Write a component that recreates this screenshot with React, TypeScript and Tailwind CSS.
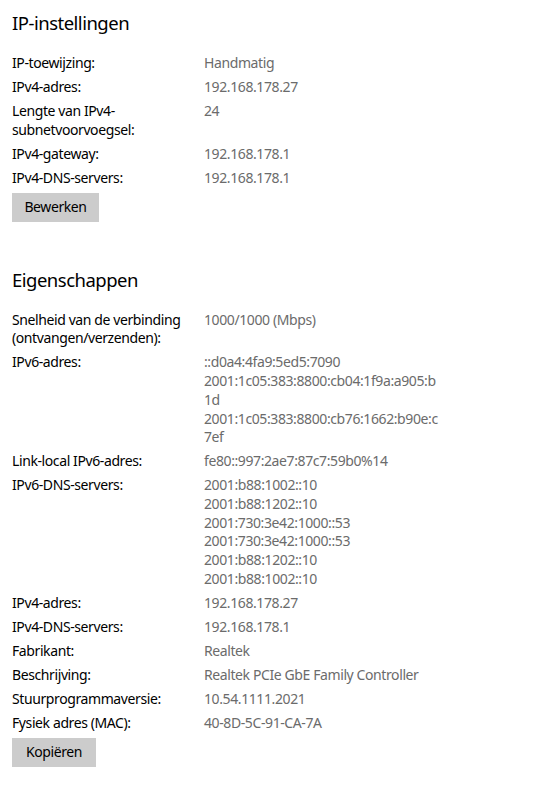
import React from "react";

type RowProps = { label: string[]; value: string[] };

const Row = ({ label, value }: RowProps) => (
  <div className="flex">
    <div className="w-[192px] shrink-0 text-black">
      {label.map((l, i) => (
        <div key={i} className="whitespace-nowrap">
          {l}
        </div>
      ))}
    </div>
    <div className="text-[#6b6b6b]">
      {value.map((v, i) => (
        <div key={i} className="whitespace-nowrap">
          {v}
        </div>
      ))}
    </div>
  </div>
);

const ipRows: RowProps[] = [
  { label: ["IP-toewijzing:"], value: ["Handmatig"] },
  { label: ["IPv4-adres:"], value: ["192.168.178.27"] },
  { label: ["Lengte van IPv4-", "subnetvoorvoegsel:"], value: ["24"] },
  { label: ["IPv4-gateway:"], value: ["192.168.178.1"] },
  { label: ["IPv4-DNS-servers:"], value: ["192.168.178.1"] },
];

const propRows: RowProps[] = [
  {
    label: ["Snelheid van de verbinding", "(ontvangen/verzenden):"],
    value: ["1000/1000 (Mbps)"],
  },
  {
    label: ["IPv6-adres:"],
    value: [
      "::d0a4:4fa9:5ed5:7090",
      "2001:1c05:383:8800:cb04:1f9a:a905:b",
      "1d",
      "2001:1c05:383:8800:cb76:1662:b90e:c",
      "7ef",
    ],
  },
  { label: ["Link-local IPv6-adres:"], value: ["fe80::997:2ae7:87c7:59b0%14"] },
  {
    label: ["IPv6-DNS-servers:"],
    value: [
      "2001:b88:1002::10",
      "2001:b88:1202::10",
      "2001:730:3e42:1000::53",
      "2001:730:3e42:1000::53",
      "2001:b88:1202::10",
      "2001:b88:1002::10",
    ],
  },
  { label: ["IPv4-adres:"], value: ["192.168.178.27"] },
  { label: ["IPv4-DNS-servers:"], value: ["192.168.178.1"] },
  { label: ["Fabrikant:"], value: ["Realtek"] },
  { label: ["Beschrijving:"], value: ["Realtek PCIe GbE Family Controller"] },
  { label: ["Stuurprogrammaversie:"], value: ["10.54.1111.2021"] },
  { label: ["Fysiek adres (MAC):"], value: ["40-8D-5C-91-CA-7A"] },
];

export default function App() {
  return (
    <div className="min-h-[800px] bg-white px-3 pt-[9px] font-['Noto_Sans','Open_Sans',sans-serif] text-[14px] leading-[18.7px] tracking-[-0.4px] text-black">
      <h2 className="text-[18.5px] leading-[28px] font-normal tracking-[-0.5px] text-black">
        IP-instellingen
      </h2>
      <div className="mt-[17px] flex flex-col items-start gap-[5.3px]">
        {ipRows.map((r, i) => (
          <Row key={i} {...r} />
        ))}
        <button className="flex h-[29px] w-[87px] items-center justify-center bg-[#cccccc] text-black">
          Bewerken
        </button>
      </div>

      <h2 className="mt-[44px] text-[18.5px] leading-[28px] font-normal tracking-[-0.5px] text-black">
        Eigenschappen
      </h2>
      <div className="mt-[17px] flex flex-col items-start gap-[5.3px]">
        {propRows.map((r, i) => (
          <Row key={i} {...r} />
        ))}
        <button className="flex h-[29px] w-[84px] items-center justify-center bg-[#cccccc] text-black">
          Kopiëren
        </button>
      </div>
    </div>
  );
}
